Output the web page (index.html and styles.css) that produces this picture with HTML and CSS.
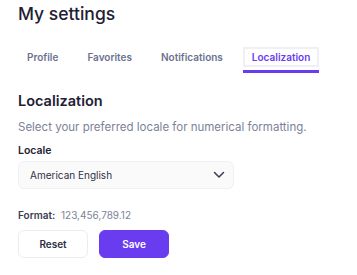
FILE: index.html
```html
<!DOCTYPE html>
<html>
<head>
    <title>My settings</title>
    <link rel="stylesheet" href="styles.css">
</head>
<body>
    <div class="settings">
        <h1>My settings</h1>

        <nav class="tabs">
            <span class="tab"><span class="tab-label">Profile</span></span>
            <span class="tab"><span class="tab-label">Favorites</span></span>
            <span class="tab"><span class="tab-label">Notifications</span></span>
            <span class="tab active"><span class="tab-label">Localization</span></span>
        </nav>

        <h2>Localization</h2>
        <p class="hint">Select your preferred locale for numerical formatting.</p>

        <label class="label">Locale</label>
        <div class="select">
            <span>American English</span>
            <svg width="12" height="8" viewBox="0 0 12 8"><path d="M1.5 1.5l4.5 4.5 4.5-4.5" fill="none" stroke="#3a3a52" stroke-width="1.5" stroke-linecap="round" stroke-linejoin="round"/></svg>
        </div>

        <div class="format">
            <b>Format:</b>
            <span>123,456,789.12</span>
        </div>

        <div class="actions">
            <button class="btn">Reset</button>
            <button class="btn primary">Save</button>
        </div>
    </div>
</body>
</html>
```

FILE: styles.css
```css
body {
    margin: 0;
    font-family: Inter, "Noto Sans", sans-serif;
    background: #fff;
    color: #1e2033;
}
.settings {
    padding: 0 18px;
}
h1 {
    margin: 0;
    padding-top: 2px;
    font-size: 17.5px;
    font-weight: 500;
    line-height: 24px;
}
.tabs {
    display: flex;
    gap: 11px;
    margin-top: 21px;
}
.tab {
    padding-bottom: 3px;
    border-bottom: 3px solid transparent;
}
.tab-label {
    display: block;
    padding: 2px 7px;
    font-size: 10px;
    font-weight: 600;
    line-height: 12px;
    color: #6b7290;
    border: 2px solid transparent;
}
.tab.active {
    border-bottom-color: #6a3cf0;
}
.tab.active .tab-label {
    color: #6a3cf0;
    border-color: #efeff6;
}
h2 {
    margin: 18px 0 0;
    font-size: 14.5px;
    font-weight: 600;
    line-height: 20px;
}
.hint {
    margin: 8px 0 0;
    font-size: 11.5px;
    line-height: 16px;
    color: #7c8299;
}
.label {
    display: block;
    margin-top: 9px;
    font-size: 10.5px;
    font-weight: 600;
    line-height: 14px;
}
.select {
    display: flex;
    align-items: center;
    justify-content: space-between;
    width: 216px;
    box-sizing: border-box;
    height: 28px;
    margin-top: 3px;
    padding: 0 8px 0 11px;
    background: #fafafa;
    border: 1px solid #f0f0f3;
    border-radius: 6px;
    font-size: 10px;
    color: #2e3045;
}
.format {
    margin-top: 19px;
    font-size: 10px;
    line-height: 14px;
    color: #7c8299;
}
.format b {
    color: #3a3c50;
    font-weight: 600;
    margin-right: 3px;
}
.actions {
    display: flex;
    gap: 11px;
    margin-top: 8px;
}
.btn {
    width: 70px;
    height: 28px;
    font-family: inherit;
    font-size: 10px;
    font-weight: 600;
    color: #2e3045;
    background: #fff;
    border: 1px solid #ececf0;
    border-radius: 6px;
}
.btn.primary {
    background: #6a3cf0;
    border-color: #6a3cf0;
    color: #fff;
}
```
